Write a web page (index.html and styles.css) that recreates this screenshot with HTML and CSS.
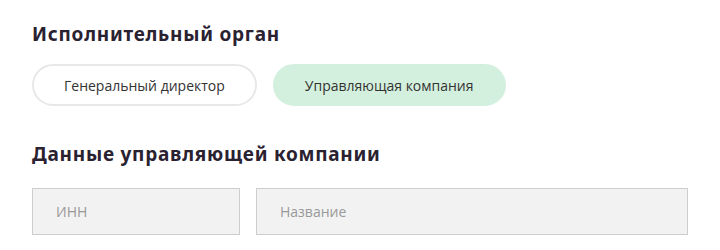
FILE: index.html
```html
<!DOCTYPE html>
<html lang="ru">
<head>
<meta charset="utf-8">
<link rel="stylesheet" href="styles.css">
</head>
<body>
<div class="page">
  <h2 class="title">Исполнительный орган</h2>
  <div class="pills">
    <button class="pill">Генеральный директор</button>
    <button class="pill pill-active">Управляющая компания</button>
  </div>
  <h2 class="title title-second">Данные управляющей компании</h2>
  <div class="fields">
    <div class="field field-inn">ИНН</div>
    <div class="field field-name">Название</div>
  </div>
</div>
</body>
</html>
```
FILE: styles.css
```css
html, body {
  margin: 0;
  padding: 0;
  background: #fff;
}
.page {
  padding: 22px 0 0 32px;
  font-family: "Open Sans", "Liberation Sans", sans-serif;
  color: #333;
}
.title {
  margin: 0;
  font-family: "Noto Sans", "Liberation Sans", sans-serif;
  font-weight: 700;
  font-size: 19px;
  line-height: 24px;
  color: #2a2131;
  letter-spacing: 0.75px;
}
.title-second {
  margin-top: 36px;
}
.pills {
  display: flex;
  gap: 16px;
  margin-top: 18px;
}
.pill {
  box-sizing: border-box;
  height: 42px;
  padding: 0 30px;
  border-radius: 21px;
  border: 2px solid #e8e8e8;
  background: #fff;
  font-family: "Open Sans", "Liberation Sans", sans-serif;
  font-size: 14px;
  color: #333;
}
.pill-active {
  border-color: #d3f0de;
  background: #d3f0de;
}
.fields {
  display: flex;
  gap: 16px;
  margin-top: 22px;
}
.field {
  box-sizing: border-box;
  height: 47px;
  display: flex;
  align-items: center;
  padding-left: 23px;
  border: 1px solid #cecece;
  background: #f2f2f2;
  color: #999;
  font-size: 14px;
}
.field-inn { width: 208px; }
.field-name { width: 432px; }
```
